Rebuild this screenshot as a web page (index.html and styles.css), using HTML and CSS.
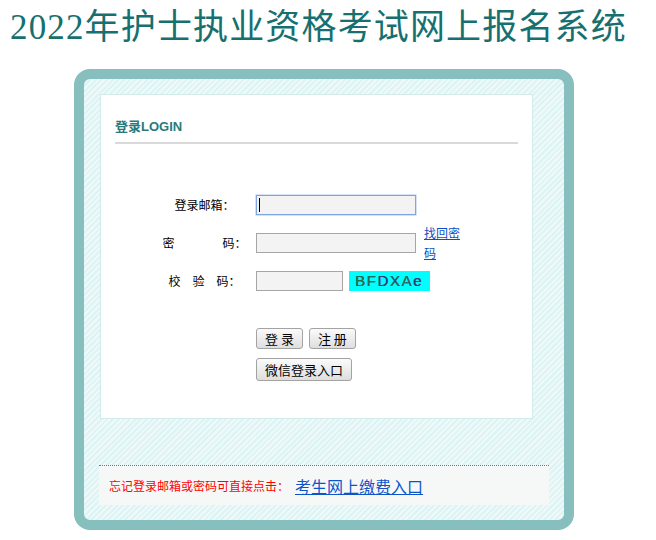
FILE: index.html
```html
<!DOCTYPE html>
<html lang="zh-CN">
<head>
<meta charset="utf-8">
<title>2022年护士执业资格考试网上报名系统</title>
<link rel="stylesheet" href="styles.css">
</head>
<body>
<h1 class="site-title">2022年护士执业资格考试网上报名系统</h1>
<div class="frame">
  <div class="panel">
    <div class="panel-title">登录LOGIN</div>
    <div class="form">
      <div class="row">
        <label class="label">登录邮箱：</label>
        <div class="field">
          <input class="input focused" type="text">
          <span class="caret"></span>
        </div>
      </div>
      <div class="row">
        <label class="label">密　　　　码：</label>
        <input class="input" type="password">
        <a class="find-link" href="#">找回密码</a>
      </div>
      <div class="row">
        <label class="label">校　验　码：</label>
        <input class="input short" type="text">
        <div class="captcha"><span class="c1">B</span><span class="c2">F</span><span class="c3">D</span><span class="c4">X</span><span class="c5">A</span><span class="c6">e</span></div>
      </div>
      <div class="buttons">
        <div class="btn-row">
          <button class="btn" type="button">登 录</button>
          <button class="btn" type="button">注 册</button>
        </div>
        <div class="btn-row">
          <button class="btn wide" type="button">微信登录入口</button>
        </div>
      </div>
    </div>
  </div>
  <div class="footer">
    <span class="notice">忘记登录邮箱或密码可直接点击：</span>
    <a class="pay-link" href="#">考生网上缴费入口</a>
  </div>
</div>
</body>
</html>
```
FILE: styles.css
```css
html, body {
  background: #ffffff;
}
body {
  margin: 8px;
  font-family: "Noto Sans CJK SC", "Liberation Sans", sans-serif;
  font-size: 12px;
  color: #000;
}
.site-title {
  margin: 0 0 0 2px;
  font-family: "Liberation Serif", "Noto Sans CJK SC", serif;
  font-weight: normal;
  font-size: 35px;
  line-height: 40px;
  letter-spacing: 1.15px;
  color: #17706f;
  white-space: nowrap;
}
.frame {
  margin: 21px 0 0 66px;
  width: 480px;
  border: 10px solid #87bebe;
  border-radius: 16px;
  background: repeating-linear-gradient(135deg, #def4f4 0 2px, #eefafa 2px 4px);
  padding: 15px 0 15px 0;
}
.panel {
  margin-left: 16px;
  width: 431px;
  background: #ffffff;
  border: 1px solid #d3ebeb;
  padding: 22px 0 0 0;
  box-sizing: content-box;
  height: 301px;
}
.panel-title {
  margin: 0 14px;
  font-family: "Liberation Sans", "Noto Sans CJK SC", sans-serif;
  font-weight: bold;
  font-size: 13px;
  line-height: 20px;
  color: #2a7a7a;
  padding-bottom: 5px;
  border-bottom: 2px solid #d9d9d9;
}
.form {
  margin-top: 51px;
  margin-left: 49px;
}
.row {
  display: flex;
  align-items: center;
  height: 20px;
  margin-bottom: 18px;
}
.label {
  width: 106px;
  padding-left: 3px;
  box-sizing: border-box;
  text-align: center;
  font-size: 12px;
  line-height: 20px;
  white-space: nowrap;
}
.field {
  position: relative;
  height: 20px;
}
.input {
  box-sizing: border-box;
  width: 160px;
  height: 20px;
  margin: 0;
  padding: 0 2px;
  background: #f3f3f3;
  border: 1px solid #a6a6a6;
  outline: none;
  display: block;
}
.input.focused {
  border-color: #7ea6e4;
  box-shadow: 0 0 0 0.5px #a9c4ee;
}
.input.short {
  width: 87px;
}
.caret {
  position: absolute;
  left: 3px;
  top: 3px;
  width: 1px;
  height: 14px;
  background: #000;
}
.find-link {
  width: 37px;
  margin-left: 8px;
  line-height: 20px;
  font-size: 12px;
  color: #0b4fc8;
  text-decoration: underline;
  word-break: break-all;
  flex: none;
}
.captcha {
  margin-left: 6px;
  width: 81px;
  height: 20px;
  background: #00ffff;
  font-family: "Liberation Sans", sans-serif;
  font-size: 15px;
  line-height: 20px;
  letter-spacing: 1.6px;
  padding-left: 6px;
  box-sizing: border-box;
  text-shadow: 0.4px 0 0 currentColor;
}
.c1 { color: #2f6a4e; }
.c2 { color: #256d5a; }
.c3 { color: #363a78; }
.c4 { color: #2d5a66; }
.c5 { color: #2f6a64; }
.c6 { color: #3b3d70; }
.buttons {
  margin-left: 106px;
  padding-top: 19px;
}
.btn-row {
  display: flex;
  gap: 6px;
  margin-bottom: 9px;
}
.btn {
  margin: 0;
  height: 21px;
  padding: 0 8px;
  font-family: "Noto Sans CJK SC", sans-serif;
  font-size: 13px;
  line-height: 19px;
  color: #000;
  background: linear-gradient(#fbfbfb, #dedede);
  border: 1px solid #a3a3a3;
  border-radius: 3px;
  box-sizing: border-box;
}
.btn.wide {
  height: 23px;
  padding: 0 8px;
}
.footer {
  margin: 46px 15px 0 15px;
  border-top: 1px dotted #777;
  background: #f6f8f8;
  height: 39px;
  display: flex;
  align-items: center;
  padding-left: 10px;
}
.notice {
  color: #ff0000;
  font-size: 12px;
  white-space: nowrap;
}
.pay-link {
  margin-left: 6px;
  font-size: 16px;
  color: #0b55c9;
  text-decoration: underline;
  white-space: nowrap;
}
```
